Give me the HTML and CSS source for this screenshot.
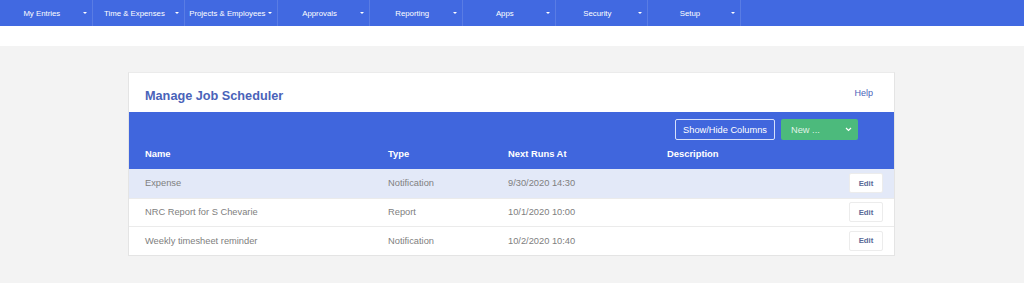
FILE: index.html
```html
<!DOCTYPE html>
<html>
<head>
<meta charset="utf-8">
<link rel="stylesheet" href="styles.css">
</head>
<body>
<nav class="topnav">
  <div class="nav-item"><span class="nav-label">My Entries</span><span class="caret"></span></div>
  <div class="nav-item"><span class="nav-label">Time &amp; Expenses</span><span class="caret"></span></div>
  <div class="nav-item"><span class="nav-label">Projects &amp; Employees</span><span class="caret"></span></div>
  <div class="nav-item"><span class="nav-label">Approvals</span><span class="caret"></span></div>
  <div class="nav-item"><span class="nav-label">Reporting</span><span class="caret"></span></div>
  <div class="nav-item"><span class="nav-label">Apps</span><span class="caret"></span></div>
  <div class="nav-item"><span class="nav-label">Security</span><span class="caret"></span></div>
  <div class="nav-item"><span class="nav-label">Setup</span><span class="caret"></span></div>
</nav>
<div class="strip"></div>
<main class="page">
  <section class="card">
    <header class="card-head">
      <h1 class="title">Manage Job Scheduler</h1>
      <a class="help">Help</a>
    </header>
    <div class="table-head">
      <div class="toolbar">
        <button class="btn-outline">Show/Hide Columns</button>
        <button class="btn-new"><span class="new-label">New ...</span>
          <svg class="chev" width="7" height="5" viewBox="0 0 7 5"><path d="M1 1 L3.5 3.5 L6 1" fill="none" stroke="#fff" stroke-width="1.2"/></svg>
        </button>
      </div>
      <div class="cols">
        <div class="c-name">Name</div>
        <div class="c-type">Type</div>
        <div class="c-next">Next Runs At</div>
        <div class="c-desc">Description</div>
      </div>
    </div>
    <div class="row row-active">
      <div class="c-name">Expense</div>
      <div class="c-type">Notification</div>
      <div class="c-next">9/30/2020 14:30</div>
      <div class="c-desc"></div>
      <button class="btn-edit">Edit</button>
    </div>
    <div class="row">
      <div class="c-name">NRC Report for S Chevarie</div>
      <div class="c-type">Report</div>
      <div class="c-next">10/1/2020 10:00</div>
      <div class="c-desc"></div>
      <button class="btn-edit">Edit</button>
    </div>
    <div class="row">
      <div class="c-name">Weekly timesheet reminder</div>
      <div class="c-type">Notification</div>
      <div class="c-next">10/2/2020 10:40</div>
      <div class="c-desc"></div>
      <button class="btn-edit">Edit</button>
    </div>
  </section>
</main>
</body>
</html>
```
FILE: styles.css
```css
* { box-sizing: border-box; }
html, body { margin: 0; padding: 0; }
body {
  font-family: "Liberation Sans", Arial, sans-serif;
  background: #f3f3f3;
  height: 283px;
  overflow: hidden;
}
.topnav {
  display: flex;
  height: 26px;
  background: #4169e1;
}
.nav-item {
  width: 92.6px;
  display: flex;
  align-items: center;
  border-right: 1px solid rgba(255,255,255,0.13);
  color: #fff;
  font-size: 7.8px;
  padding-left: 4px;
  padding-right: 4px;
}
.nav-label {
  flex: 1;
  text-align: center;
  white-space: nowrap;
}
.caret {
  flex: none;
  width: 0;
  height: 0;
  border-left: 2.5px solid transparent;
  border-right: 2.5px solid transparent;
  border-top: 2.5px solid #fff;
  margin-left: 3px;
  margin-right: 1px;
}
.strip {
  height: 20px;
  background: #fff;
}
.page {
  padding: 26px 0 0 128px;
}
.card {
  width: 767px;
  background: #fff;
  border: 1px solid #e4e4e4;
  border-top: 1px solid #ebebeb;
}
.card-head {
  height: 39px;
  display: flex;
  align-items: center;
  justify-content: space-between;
  padding: 0 21px 0 16px;
}
.title {
  margin: 6px 0 0 0;
  font-size: 12.7px;
  font-weight: bold;
  color: #4a63b9;
}
.help {
  font-size: 9px;
  color: #4a63b9;
  margin-top: 1px;
}
.table-head {
  background: #4066dd;
  height: 57px;
  padding-top: 7px;
}
.toolbar {
  display: flex;
  justify-content: flex-end;
  gap: 6px;
  padding-right: 36px;
  height: 21px;
}
.btn-outline {
  font-family: inherit;
  font-size: 9.25px;
  color: #fff;
  background: transparent;
  border: 1px solid #d6e0fb;
  border-radius: 2px;
  width: 100px;
  height: 21px;
  padding: 0;
}
.btn-new {
  font-family: inherit;
  font-size: 9.25px;
  color: #fff;
  background: #4cba7c;
  border: none;
  border-radius: 2px;
  width: 77px;
  height: 21px;
  display: flex;
  align-items: center;
  justify-content: space-between;
  padding: 0 6px 0 10px;
}
.new-label { color: rgba(255,255,255,0.85); }
.cols, .row {
  display: flex;
  align-items: center;
  padding-left: 16px;
}
.cols {
  height: 29px;
  color: #fff;
  font-weight: bold;
  font-size: 9.4px;
  padding-bottom: 2px;
}
.c-name { width: 243px; }
.c-type { width: 120px; }
.c-next { width: 159px; }
.c-desc { flex: 1; }
.row {
  height: 28.5px;
  font-size: 9.3px;
  color: #808080;
  border-top: 1px solid #ebebeb;
  padding-right: 11px;
}
.row-active {
  background: #e3e9f8;
  border-top: none;
}
.btn-edit {
  font-family: inherit;
  font-size: 7.8px;
  font-weight: bold;
  color: #5b6a98;
  background: #fff;
  border: 1px solid #ececec;
  border-radius: 2px;
  width: 34px;
  height: 20px;
  padding: 0;
}
```
